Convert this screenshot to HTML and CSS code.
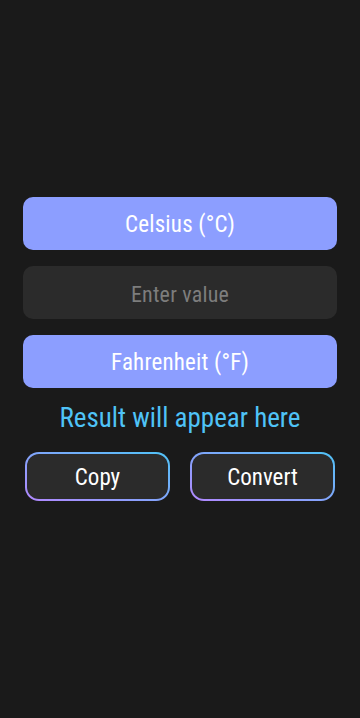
FILE: index.html
```html
<!DOCTYPE html>
<html lang="en">
  <head>
    <meta charset="UTF-8">
    <title>Temperature Converter</title>
    <link rel="stylesheet" href="styles.css">
  </head>
  <body>
    <div id="app">
      <button class="unit">Celsius (°C)</button>
      <input class="value" type="text" placeholder="Enter value">
      <button class="unit">Fahrenheit (°F)</button>
      <div class="result">Result will appear here</div>
      <div class="actions">
        <div class="ring"><button class="action">Copy</button></div>
        <div class="ring"><button class="action">Convert</button></div>
      </div>
    </div>
  </body>
</html>
```

FILE: styles.css
```css
html, body { margin: 0; padding: 0; }
body { background: #1a1a1a; font-family: "Roboto Condensed", Roboto, "Liberation Sans", sans-serif; height: 718px; }
#app { width: 314px; margin: 0 auto; padding-top: 197px; display: flex; flex-direction: column; gap: 16px; }
button, input { font-family: inherit; border: 0; outline: 0; box-sizing: border-box; }
.unit { height: 53px; padding-top: 3px; background: #8c9eff; color: #fff; border-radius: 10px; font-size: 23px; letter-spacing: 0.2px; }
.value { height: 53px; background: #2b2b2b; color: #fff; border-radius: 10px; font-size: 22px; text-align: center; padding: 3px 0 0; letter-spacing: 0.2px; }
.value::placeholder { color: #7d7d7d; }
.result { color: #4fc3f7; font-size: 27px; line-height: 32px; text-align: center; margin-top: -2px; }
.actions { display: flex; gap: 20px; padding: 0 2px; margin-top: 2px; }
.ring { flex: 1; padding: 2px; border-radius: 14px; background: linear-gradient(to top right, #b388ff, #4fc3f7); }
.action { width: 100%; height: 45px; padding-top: 2px; background: #2b2b2b; color: #fff; font-size: 23px; border-radius: 12px; display: block; }
```
